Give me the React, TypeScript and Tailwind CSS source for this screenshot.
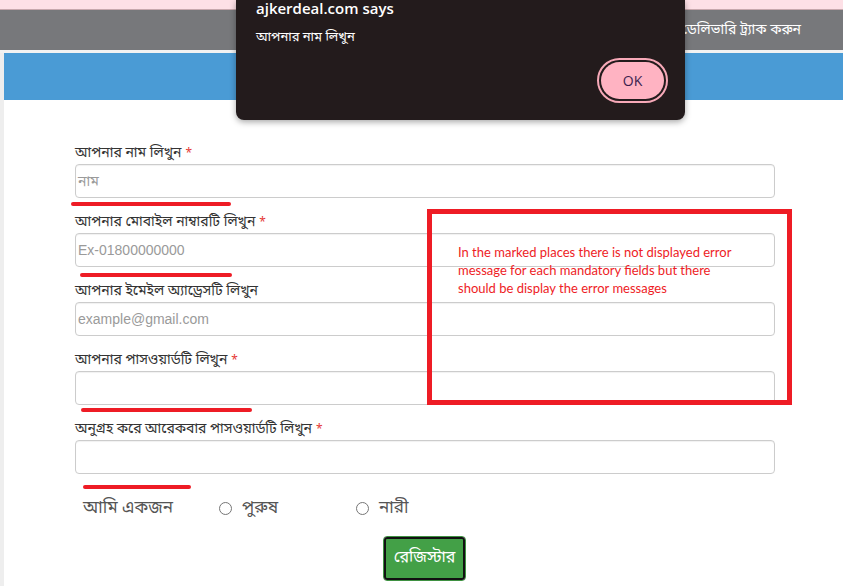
import React from "react";

const bn = { fontFamily: '"Noto Sans Bengali", "Vrinda", "Noto Sans", sans-serif' } as React.CSSProperties;

function Field({ label, required, placeholder }: { label: string; required?: boolean; placeholder?: string }) {
  return (
    <div className="mb-[15px]">
      <div className="h-[20px] text-[14px] leading-[20px] text-[#333]" style={bn}>
        {label}
        {required && <span className="ml-[4px] text-[12px] text-[#e53935]">*</span>}
      </div>
      <div className="flex h-[34px] w-[700px] items-center rounded-[4px] border border-[#cccccc] bg-white px-[2px] shadow-[inset_0_1px_1px_rgba(0,0,0,0.06)]">
        {placeholder && (
          <span className="text-[14px] text-[#9a9a9a] font-['Liberation_Sans',Arial,'Noto_Sans_Bengali',sans-serif]">{placeholder}</span>
        )}
      </div>
    </div>
  );
}

export default function App() {
  return (
    <div className="relative h-[586px] w-[843px] overflow-hidden bg-[#eeeeee]">
      {/* top pink strip */}
      <div className="h-[10px] border-b border-[#c7a8ad] bg-[#fde0e6]" />
      {/* grey nav */}
      <div className="flex h-[40px] items-center justify-end bg-[#77787b] pr-[42px]">
        <span className="text-[14px] text-white" style={bn}>ডেলিভারি ট্র্যাক করুন</span>
      </div>
      <div className="h-[3px] bg-[#f2f2f2]" />
      <div className="ml-[4px] bg-white">
        <div className="h-[47px] bg-[#4a9bd5]" />
        <div className="pl-[71px] pt-[44px]">
          <Field label="আপনার নাম লিখুন" required placeholder="নাম" />
          <Field label="আপনার মোবাইল নাম্বারটি লিখুন" required placeholder="Ex-01800000000" />
          <Field label="আপনার ইমেইল অ্যাড্রেসটি লিখুন" placeholder="example@gmail.com" />
          <Field label="আপনার পাসওয়ার্ডটি লিখুন" required />
          <Field label="অনুগ্রহ করে আরেকবার পাসওয়ার্ডটি লিখুন" required />
          <div className="flex items-center pl-[8px] pt-[7px] text-[17px] text-[#555]" style={bn}>
            <span className="w-[136px]">আমি একজন</span>
            <label className="flex w-[137px] items-center gap-[10px]">
              <span className="inline-block h-[13px] w-[13px] rounded-full border border-[#767676] bg-white" />
              <span>পুরুষ</span>
            </label>
            <label className="flex items-center gap-[10px]">
              <span className="inline-block h-[13px] w-[13px] rounded-full border border-[#767676] bg-white" />
              <span>নারী</span>
            </label>
          </div>
          <div className="flex pl-[308px] pt-[14px] pb-[20px]">
            <button className="h-[45px] w-[83px] rounded-[4px] border border-[#3f9142] bg-white p-0">
              <span className="flex h-full w-full items-center justify-center rounded-[3px] border-2 border-[#111] bg-[#43a047] text-[16px] text-white" style={bn}>
                রেজিস্টার
              </span>
            </button>
          </div>
        </div>
      </div>

      {/* annotation underlines */}
      <div className="absolute left-[71px] top-[202px] h-[4px] w-[160px] rounded-full bg-[#ee1c25]" />
      <div className="absolute left-[80px] top-[273px] h-[4px] w-[152px] rounded-full bg-[#ee1c25]" />
      <div className="absolute left-[81px] top-[408px] h-[4px] w-[171px] rounded-full bg-[#ee1c25]" />
      <div className="absolute left-[83px] top-[485px] h-[4px] w-[108px] rounded-full bg-[#ee1c25]" />

      {/* annotation box */}
      <div className="absolute left-[427px] top-[209px] h-[196px] w-[365px] border-[5px] border-[#ee1c25]">
        <div className="pl-[26px] pt-[29px] text-[13px] leading-[18px] text-[#ee1c25] font-['Lato','Open_Sans',sans-serif]">
          In the marked places there is not displayed error
          <br />
          message for each mandatory fields but there
          <br />
          should be display the error messages
        </div>
      </div>

      {/* alert dialog */}
      <div className="absolute left-[236px] top-0 h-[120px] w-[449px] rounded-b-[8px] bg-[#231b1c] shadow-[0_2px_6px_rgba(0,0,0,0.35)]">
        <div className="pl-[20px] pt-0 text-[15px] font-semibold leading-[16px] text-white font-['Open_Sans','Noto_Sans',sans-serif]">
          ajkerdeal.com says
        </div>
        <div className="pl-[20px] pt-[12px] text-[13px] text-white" style={bn}>
          আপনার নাম লিখুন
        </div>
        <div className="absolute left-[361px] top-[58px] flex h-[45px] w-[71px] items-center justify-center rounded-full border-2 border-[#f7a9b8] bg-[#231b1c]">
          <div className="flex h-[37px] w-[63px] items-center justify-center rounded-full bg-[#ffb3c2] text-[14px] text-[#3b1f4f] font-['Open_Sans',sans-serif]">
            OK
          </div>
        </div>
      </div>
    </div>
  );
}
